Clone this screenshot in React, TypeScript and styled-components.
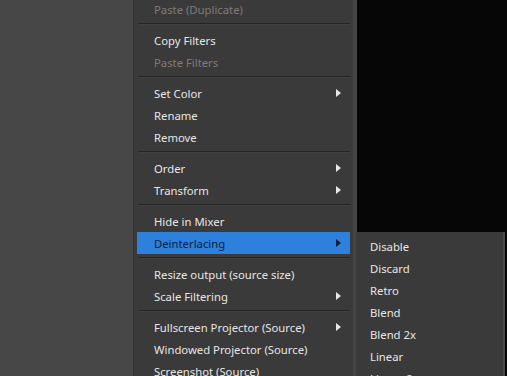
import React from 'react';
import styled, {createGlobalStyle} from "styled-components";

const GlobalStyle = createGlobalStyle`
  html, body {
    margin: 0;
    padding: 0;
    width: 507px;
    height: 376px;
    overflow: hidden;
    background: #474747;
  }
`;

const Screen = styled.div`
  display: flex;
  width: 507px;
  height: 376px;
  overflow: hidden;
  font-family: "Noto Sans", "Open Sans", sans-serif;
  font-size: 11.3px;
`;

const LeftPanel = styled.div`
  width: 133px;
  flex-shrink: 0;
  background: #474747;
`;

const Menu = styled.div`
  box-sizing: border-box;
  width: 224px;
  flex-shrink: 0;
  background: #3b3a3a;
  border-left: 1px solid #343333;
  border-right: 4px solid #464545;
  padding: 0 3px 0 3px;
  margin-top: -2px;
`;

const Preview = styled.div`
  position: relative;
  flex: 1;
  background: #060606;
`;

const Item = styled.div<{ $disabled?: boolean; $active?: boolean }>`
  display: flex;
  align-items: center;
  justify-content: space-between;
  height: 22px;
  padding: 0 9px 0 17px;
  color: ${p => p.$disabled ? '#7b7b7b' : p.$active ? '#0d1e3d' : '#e6e6e6'};
  background: ${p => p.$active ? '#2d80dc' : 'transparent'};
  white-space: nowrap;
`;

const Separator = styled.div`
  height: 9px;
  display: flex;
  align-items: flex-start;
  padding: 3px 0 0 2px;
  box-sizing: border-box;

  &::after {
    content: "";
    flex: 1;
    height: 1px;
    background: #262525;
    box-shadow: 0 1px 0 #414040;
  }
`;

const Arrow = styled.span<{ $active?: boolean }>`
  width: 0;
  height: 0;
  border-top: 4px solid transparent;
  border-bottom: 4px solid transparent;
  border-left: 5px solid ${p => p.$active ? '#0d1e3d' : '#e8e8e8'};
`;

const SubMenu = styled.div`
  position: absolute;
  left: -1px;
  top: 232px;
  width: 147px;
  height: 160px;
  background: #3b3a3a;
  border-right: 2px solid #4a4949;
  padding-top: 3px;
`;

const SubItem = styled.div`
  height: 22px;
  display: flex;
  align-items: center;
  padding-left: 14px;
  color: #e6e6e6;
`;

type Entry = { label?: string; disabled?: boolean; sub?: boolean; active?: boolean; sep?: boolean };

const entries: Entry[] = [
    {label: 'Paste (Duplicate)', disabled: true},
    {sep: true},
    {label: 'Copy Filters'},
    {label: 'Paste Filters', disabled: true},
    {sep: true},
    {label: 'Set Color', sub: true},
    {label: 'Rename'},
    {label: 'Remove'},
    {sep: true},
    {label: 'Order', sub: true},
    {label: 'Transform', sub: true},
    {sep: true},
    {label: 'Hide in Mixer'},
    {label: 'Deinterlacing', sub: true, active: true},
    {sep: true},
    {label: 'Resize output (source size)'},
    {label: 'Scale Filtering', sub: true},
    {sep: true},
    {label: 'Fullscreen Projector (Source)', sub: true},
    {label: 'Windowed Projector (Source)'},
    {label: 'Screenshot (Source)'},
];

const deinterlace = ['Disable', 'Discard', 'Retro', 'Blend', 'Blend 2x', 'Linear', 'Linear 2x'];

export default function App() {
    return (
        <>
            <GlobalStyle/>
            <Screen>
                <LeftPanel/>
                <Menu>
                    {entries.map((e, i) => e.sep
                        ? <Separator key={i}/>
                        : (
                            <Item key={i} $disabled={e.disabled} $active={e.active}>
                                <span>{e.label}</span>
                                {e.sub && <Arrow $active={e.active}/>}
                            </Item>
                        ))}
                </Menu>
                <Preview>
                    <SubMenu>
                        {deinterlace.map(d => <SubItem key={d}>{d}</SubItem>)}
                    </SubMenu>
                </Preview>
            </Screen>
        </>
    );
}
